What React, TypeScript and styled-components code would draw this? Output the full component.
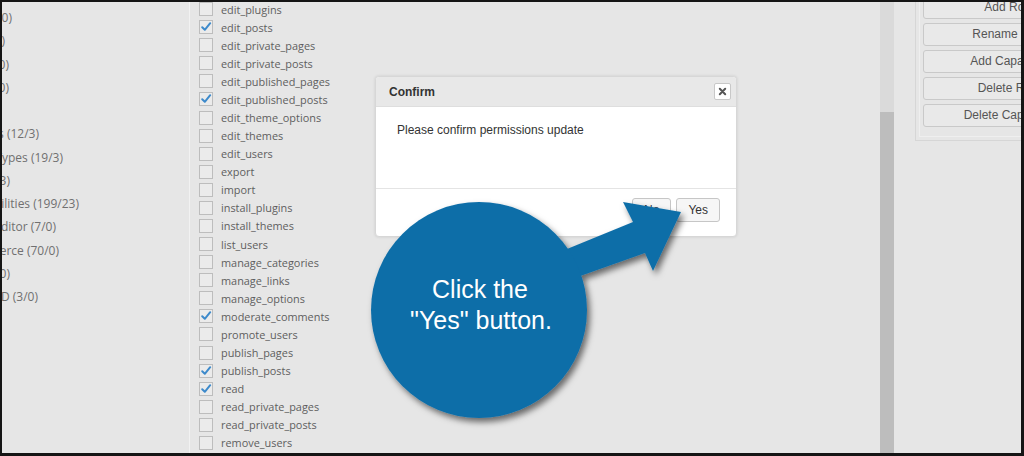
import styled, { createGlobalStyle } from 'styled-components';

const GlobalStyle = createGlobalStyle`
  body {
    margin: 0;
    background: #ffffff;
  }
`;

const groups: [string, number][] = [
  ['Pages (8/0)', 10],
  ['Plugins (6/0)', 3],
  ['Users (9/0)', 7],
  ['Multisite (0/0)', 7],
  ['Deprecated', 0],
  ['Posts (12/3)', 37],
  ['Custom Post Types (19/3)', 61],
  ['Media (3/3)', 8],
  ['Custom capabilities (199/23)', 77],
  ['User Role Editor (7/0)', 54],
  ['WooCommerce (70/0)', 57],
  ['WPForms (5/0)', 8],
  ['User ID (3/0)', 36],
];

const caps: [string, boolean][] = [
  ['edit_plugins', false],
  ['edit_posts', true],
  ['edit_private_pages', false],
  ['edit_private_posts', false],
  ['edit_published_pages', false],
  ['edit_published_posts', true],
  ['edit_theme_options', false],
  ['edit_themes', false],
  ['edit_users', false],
  ['export', false],
  ['import', false],
  ['install_plugins', false],
  ['install_themes', false],
  ['list_users', false],
  ['manage_categories', false],
  ['manage_links', false],
  ['manage_options', false],
  ['moderate_comments', true],
  ['promote_users', false],
  ['publish_pages', false],
  ['publish_posts', true],
  ['read', true],
  ['read_private_pages', false],
  ['read_private_posts', false],
  ['remove_users', false],
];

const sideActions = ['Add Role', 'Rename Role', 'Add Capability', 'Delete Role', 'Delete Capability'];

const Frame = styled.div`
  position: relative;
  display: flex;
  width: 1024px;
  height: 456px;
  box-sizing: border-box;
  border-style: solid;
  border-color: #151515;
  border-width: 2px 3px 3px 2px;
  background: #e6e6e6;
  overflow: hidden;
  font-family: 'Open Sans', 'Noto Sans', sans-serif;
`;

const GroupColumn = styled.div`
  flex: none;
  width: 187px;
  padding-top: 4px;
  border-right: 1px solid #f2f2f2;
  overflow: hidden;
`;

const GroupRow = styled.div<{ $end: number }>`
  display: flex;
  justify-content: flex-end;
  align-items: center;
  width: ${(p) => p.$end}px;
  height: 23.25px;
  white-space: nowrap;
  font-size: 12px;
  color: #707070;
`;

const CapColumn = styled.div`
  flex: none;
  width: 681px;
  margin-top: -2px;
  padding-left: 9px;
`;

const CapRow = styled.div`
  display: flex;
  align-items: center;
  gap: 8px;
  height: 18.08px;
`;

const Box = styled.span`
  display: flex;
  align-items: center;
  justify-content: center;
  width: 14px;
  height: 14px;
  box-sizing: border-box;
  border: 1px solid #bdbdbd;
  background: #ebebeb;
`;

const CapLabel = styled.span`
  font-size: 10.9px;
  color: #5e5e5e;
  white-space: nowrap;
`;

const ScrollTrack = styled.div`
  flex: none;
  display: flex;
  flex-direction: column;
  width: 14px;
  padding-top: 110px;
  box-sizing: border-box;
  background: #dadada;
`;

const ScrollThumb = styled.div`
  flex: 1;
  background: #bdbdbd;
`;

const SidePanel = styled.div`
  flex: none;
  align-self: flex-start;
  width: 200px;
  margin: -20px 0 0 21px;
  padding: 3px;
  border: 1px solid #d6d6d6;
`;

const SideInner = styled.div`
  display: flex;
  flex-direction: column;
  gap: 4px;
  padding: 9px 0 9px 3px;
  border: 1px solid #efefef;
`;

const SideButton = styled.div`
  width: 172px;
  height: 23px;
  box-sizing: border-box;
  border: 1px solid #c9c9c9;
  border-radius: 3px;
  background: #e9e9e9;
  font: 12px/21px 'Liberation Sans', Arial, sans-serif;
  color: #555555;
  text-align: center;
`;

const Dialog = styled.div`
  position: absolute;
  left: 373px;
  top: 74px;
  display: flex;
  flex-direction: column;
  width: 362px;
  height: 161px;
  box-sizing: border-box;
  border: 1px solid #d7d7d7;
  border-radius: 4px;
  background: #ffffff;
  box-shadow: 0 0 3px rgba(0, 0, 0, 0.12);
  font-family: 'Liberation Sans', Arial, sans-serif;
  color: #333333;
`;

const TitleBar = styled.div`
  display: flex;
  align-items: center;
  justify-content: space-between;
  height: 30px;
  box-sizing: border-box;
  padding: 0 5px 0 13px;
  border-bottom: 1px solid #dedede;
  border-radius: 3px 3px 0 0;
  background: #e8e8e8;
`;

const Title = styled.span`
  font-size: 12px;
  font-weight: bold;
  color: #333333;
`;

const CloseButton = styled.span`
  display: flex;
  align-items: center;
  justify-content: center;
  width: 17px;
  height: 17px;
  box-sizing: border-box;
  border: 1px solid #c8c8c8;
  border-radius: 2px;
  background: #ffffff;
`;

const DialogBody = styled.div`
  height: 81px;
  box-sizing: border-box;
  padding: 16px 21px;
  font-size: 12px;
  line-height: 14px;
`;

const DialogFooter = styled.div`
  display: flex;
  justify-content: flex-end;
  gap: 5px;
  padding: 9px 16px 0 0;
  border-top: 1px solid #e4e4e4;
`;

const DialogButton = styled.span`
  display: flex;
  align-items: center;
  height: 24px;
  box-sizing: border-box;
  padding: 0 11px;
  border: 1px solid #c6c6c6;
  border-radius: 3px;
  background: #f6f6f6;
  font-size: 12px;
  color: #333333;
`;

const Callout = styled.svg`
  position: absolute;
  left: 358px;
  top: 188px;
  overflow: visible;
`;

const CheckMark = () => (
  <svg width="12" height="12" viewBox="0 0 12 12">
    <path d="M2.2 6.2 L4.8 8.8 L10.2 2.2" fill="none" stroke="#3d8acb" strokeWidth="2" strokeLinecap="round" strokeLinejoin="round" />
  </svg>
);

const App = () => {
  return (
    <>
      <GlobalStyle />
      <Frame>
        <GroupColumn>
          {groups.map(([label, end]) => (
            <GroupRow key={label} $end={end}>
              {label}
            </GroupRow>
          ))}
        </GroupColumn>
        <CapColumn>
          {caps.map(([cap, on]) => (
            <CapRow key={cap}>
              <Box>{on && <CheckMark />}</Box>
              <CapLabel>{cap}</CapLabel>
            </CapRow>
          ))}
        </CapColumn>
        <ScrollTrack>
          <ScrollThumb />
        </ScrollTrack>
        <SidePanel>
          <SideInner>
            {sideActions.map((a) => (
              <SideButton key={a}>{a}</SideButton>
            ))}
          </SideInner>
        </SidePanel>

        <Dialog>
          <TitleBar>
            <Title>Confirm</Title>
            <CloseButton>
              <svg width="9" height="9" viewBox="0 0 9 9">
                <path d="M1.8 1.8 L7.2 7.2 M7.2 1.8 L1.8 7.2" stroke="#555" strokeWidth="2" strokeLinecap="round" />
              </svg>
            </CloseButton>
          </TitleBar>
          <DialogBody>Please confirm permissions update</DialogBody>
          <DialogFooter>
            <DialogButton>No</DialogButton>
            <DialogButton>Yes</DialogButton>
          </DialogFooter>
        </Dialog>

        <Callout width="340" height="240" viewBox="360 190 340 240">
          <defs>
            <filter id="callout-shadow" x="-20%" y="-20%" width="140%" height="140%">
              <feDropShadow dx="3" dy="4" stdDeviation="3" floodColor="#000" floodOpacity="0.55" />
            </filter>
          </defs>
          <g filter="url(#callout-shadow)" fill="#0f6ea8">
            <polygon points="545,258 633,222 623,202 681,212 653,271 645,253 555,285" />
            <circle cx="479" cy="310" r="108" />
          </g>
          <text x="480" y="298" textAnchor="middle" fill="#ffffff" fontSize="25" fontFamily="'Liberation Sans', Arial, sans-serif">
            Click the
          </text>
          <text x="481" y="329" textAnchor="middle" fill="#ffffff" fontSize="25" fontFamily="'Liberation Sans', Arial, sans-serif">
            "Yes" button.
          </text>
        </Callout>
      </Frame>
    </>
  );
};

export default App;
